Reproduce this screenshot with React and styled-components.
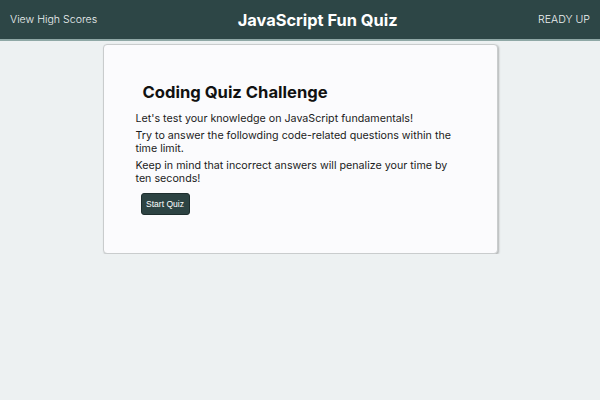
import React from "react";
import styled, { createGlobalStyle } from "styled-components";

const Global = createGlobalStyle`
  body {
    margin: 0;
    background-color: #edf1f2;
    font-family: "Inter", "Open Sans", sans-serif;
  }
`;

const Header = styled.header`
  display: flex;
  justify-content: space-between;
  align-items: center;
  height: 39px;
  padding: 0 10px;
  background-color: #2d4646;
  border-bottom: 2px solid #8fa8a6;
  color: #eef2f2;
`;

const NavText = styled.span`
  font-size: 10.6px;
  font-weight: 300;
`;

const Title = styled.h1`
  margin: 0;
  font-size: 16.4px;
  font-weight: 700;
  color: #ffffff;
`;

const Main = styled.main`
  display: flex;
  justify-content: center;
  padding-top: 3px;
`;

const Card = styled.section`
  box-sizing: border-box;
  width: 395px;
  height: 210px;
  padding: 37px 32px 0 32px;
  background-color: #fbfbfd;
  border: 1px solid #c9cccd;
  border-radius: 4px;
  box-shadow: 1px 1px 2px rgba(0, 0, 0, 0.25);
`;

const CardTitle = styled.h2`
  margin: 0 0 11px 7px;
  font-size: 16.6px;
  font-weight: 700;
  color: #111;
`;

const Para = styled.p`
  margin: 0 0 4.5px 0;
  font-size: 10.7px;
  line-height: 12.7px;
  color: #1c1c1c;
`;

const StartButton = styled.button`
  margin: 3px 0 0 5px;
  width: 49px;
  height: 22px;
  padding: 0;
  background-color: #2d4343;
  color: #ffffff;
  border: 1px solid #1e2e2e;
  border-radius: 3px;
  font-family: "Liberation Sans", Arial, sans-serif;
  font-size: 8.5px;
  cursor: pointer;
`;

export default function App() {
  return (
    <>
      <Global />
      <Header>
        <NavText>View High Scores</NavText>
        <Title>JavaScript Fun Quiz</Title>
        <NavText>READY UP</NavText>
      </Header>
      <Main>
        <Card>
          <CardTitle>Coding Quiz Challenge</CardTitle>
          <Para>Let's test your knowledge on JavaScript fundamentals!</Para>
          <Para>
            Try to answer the followding code-related questions within the
            time limit.
          </Para>
          <Para>
            Keep in mind that incorrect answers will penalize your time by
            ten seconds!
          </Para>
          <StartButton>Start Quiz</StartButton>
        </Card>
      </Main>
    </>
  );
}
